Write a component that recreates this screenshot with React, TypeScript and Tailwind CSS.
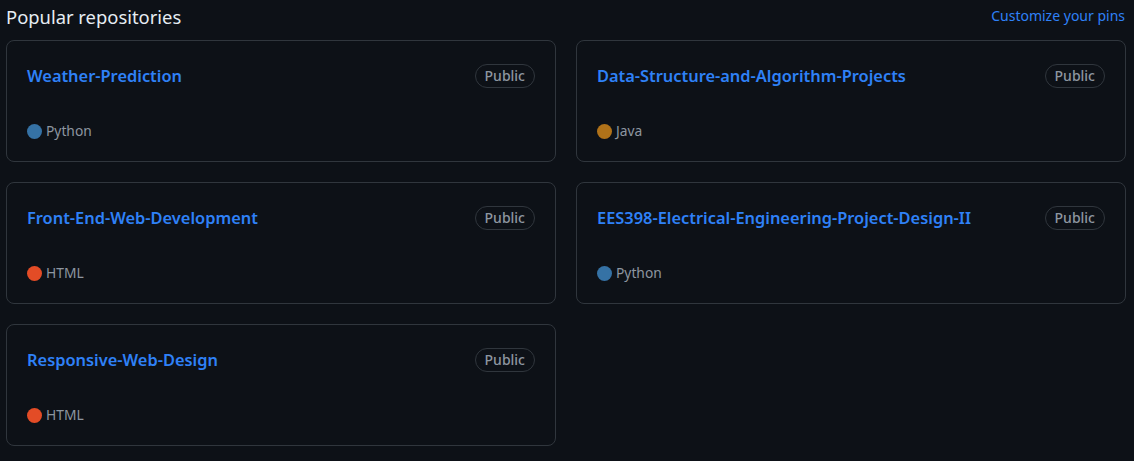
import React from "react";

type Repo = { name: string; lang: string; color: string };

const repos: Repo[] = [
  { name: "Weather-Prediction", lang: "Python", color: "#3572A5" },
  { name: "Data-Structure-and-Algorithm-Projects", lang: "Java", color: "#b07219" },
  { name: "Front-End-Web-Development", lang: "HTML", color: "#e34c26" },
  { name: "EES398-Electrical-Engineering-Project-Design-II", lang: "Python", color: "#3572A5" },
  { name: "Responsive-Web-Design", lang: "HTML", color: "#e34c26" },
];

function Card({ repo }: { repo: Repo }) {
  return (
    <div className="h-[122px] rounded-[8px] border border-[#30363d] pt-[20px] px-[20px] pb-[19px] flex flex-col justify-between">
      <div className="flex items-start justify-between">
        <span className="text-[16.4px] leading-[26px] font-semibold text-[#2f81f7] mt-[2px]">{repo.name}</span>
        <span className="mt-[3px] h-[24px] px-[9px] rounded-full border border-[#30363d] text-[14px] leading-[22px] font-medium text-[#8d96a0]">
          Public
        </span>
      </div>
      <div className="flex items-center h-[22px] text-[13.8px] text-[#8d96a0]">
        <span className="w-[15px] h-[15px] rounded-full mr-[4px]" style={{ backgroundColor: repo.color }} />
        <span>{repo.lang}</span>
      </div>
    </div>
  );
}

export default function App() {
  return (
    <div
      className="w-[1134px] h-[461px] bg-[#0d1117] px-[6px] pt-[2px]"
      style={{ fontFamily: '"Noto Sans", "Liberation Sans", sans-serif' }}
    >
      <div className="flex items-center justify-between h-[30px] mr-[3px]">
        <span className="text-[18.4px] text-[#e6edf3]">Popular repositories</span>
        <span className="text-[14px] text-[#2f81f7] -mt-[4px]">Customize your pins</span>
      </div>
      <div className="mt-[8px] grid grid-cols-2 gap-x-[20px] gap-y-[20px] w-[1120px]">
        {repos.map((r) => (
          <Card key={r.name} repo={r} />
        ))}
      </div>
    </div>
  );
}
